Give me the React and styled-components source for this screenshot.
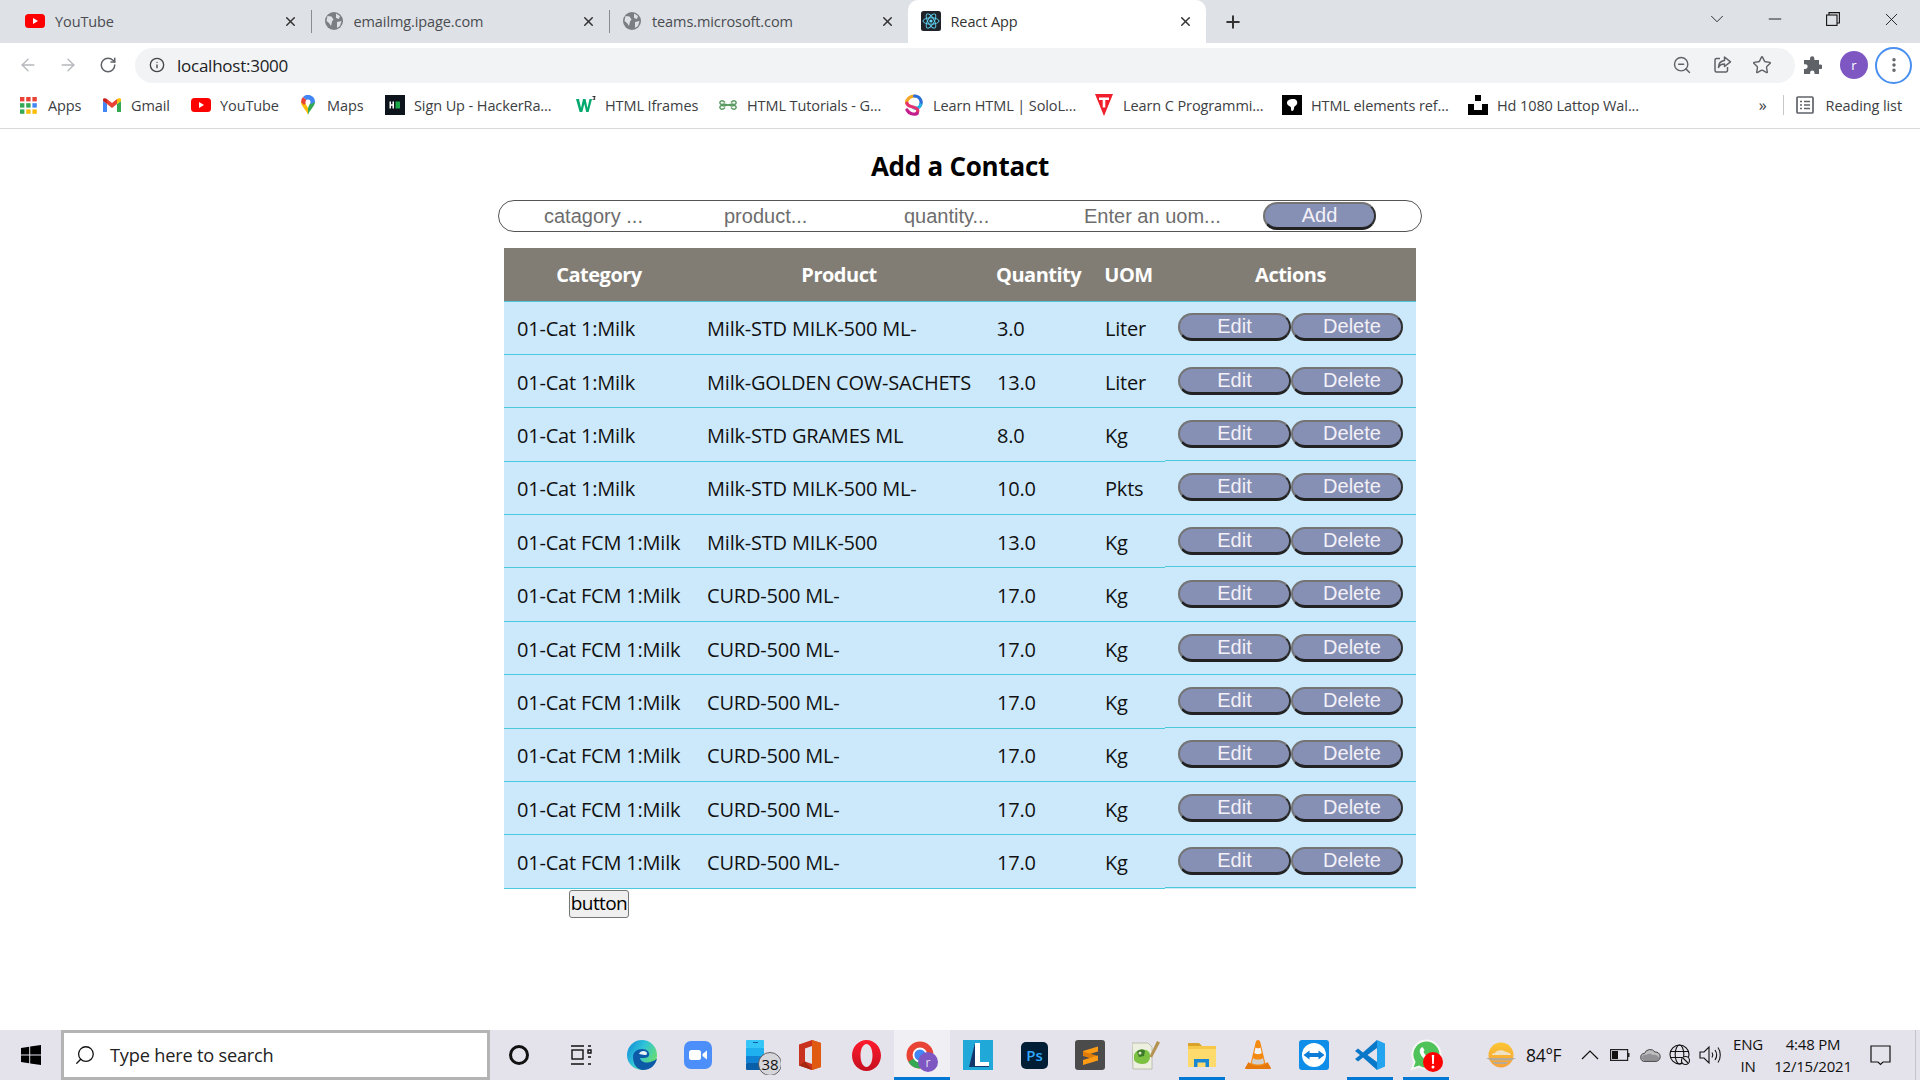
import styled, { createGlobalStyle } from "styled-components";
import { ArrowLeft, ArrowRight, RotateCw, Info, ZoomOut, Star, EllipsisVertical, X, Plus, ChevronDown, Minus, Search } from "lucide-react";

const GlobalStyle = createGlobalStyle`
  html, body { margin: 0; padding: 0; background: #fff; }
  * { box-sizing: border-box; }
`;

const UI_FONT = `"Open Sans", "Noto Sans", sans-serif`;

const YoutubeIcon = () => (
  <svg width="20" height="14" viewBox="0 0 20 14">
    <rect width="20" height="14" rx="3.5" fill="#f00" />
    <path d="M8 4v6l5-3z" fill="#fff" />
  </svg>
);

const GlobeFav = () => (
  <svg width="18" height="18" viewBox="0 0 18 18">
    <circle cx="9" cy="9" r="9" fill="#7b7e83" />
    <path d="M2.500 4l4 .5 2 3-1.500 2-1 4.500-2-3-2.500-2zM11 1.500l4 2.500-1 3-3-1zM12 10l4.500-1-1.500 5-3 2z" fill="#dee1e6" />
  </svg>
);

const ReactFav = () => (
  <svg width="20" height="20" viewBox="0 0 20 20">
    <rect width="20" height="20" rx="2.500" fill="#20232a" />
    <g fill="none" stroke="#61dafb" strokeWidth="0.9">
      <ellipse cx="10" cy="10" rx="8" ry="3.200" />
      <ellipse cx="10" cy="10" rx="8" ry="3.200" transform="rotate(60 10 10)" />
      <ellipse cx="10" cy="10" rx="8" ry="3.200" transform="rotate(120 10 10)" />
    </g>
    <circle cx="10" cy="10" r="1.600" fill="#61dafb" />
  </svg>
);

const RestoreIcon = () => (
  <svg width="14" height="14" viewBox="0 0 14 14" fill="none" stroke="#111" strokeWidth="1.100">
    <rect x="0.600" y="3" width="10.400" height="10.400" />
    <path d="M3 3V.6h10.400V11H11" />
  </svg>
);

const ShareIcon = () => (
  <svg width="20" height="20" viewBox="0 0 20 20" fill="none" stroke="#5f6368" strokeWidth="1.500" strokeLinejoin="round">
    <path d="M8 3.500H4.500A1.500 1.500 0 0 0 3 5v10.500A1.500 1.500 0 0 0 4.500 17h9.500a1.500 1.500 0 0 0 1.500-1.500V12" />
    <path d="M12.500 2l6 4.800-6 4.700V9c-3 0-5 1-6 3.500 0-4.500 2-6.500 6-7z" />
  </svg>
);

const PuzzleIcon = () => (
  <svg width="19" height="19" viewBox="0 0 19 19" fill="#5f6368">
    <path d="M7 2.500a2.200 2.200 0 0 1 4.400 0V4H16v4.500h1.300a2.300 2.300 0 0 1 0 4.600H16V18h-4.500v-1.300a2.200 2.200 0 0 0-4.400 0V18H1v-5h1.300a2.400 2.400 0 0 0 0-4.800H1V4h6z" />
  </svg>
);

const AppsIcon = () => {
  const colors = ["#ea4335", "#ea4335", "#ea4335", "#34a853", "#34a853", "#4285f4", "#34a853", "#fbbc04", "#fbbc04"];
  return (
    <svg width="17" height="17" viewBox="0 0 17 17">
      {colors.map((c, i) => (
        <rect key={i} x={(i % 3) * 6.2} y={Math.floor(i / 3) * 6.2} width="4.400" height="4.400" fill={c} />
      ))}
    </svg>
  );
};

const GmailIcon = () => (
  <svg width="18" height="14" viewBox="0 0 18 14">
    <path d="M0 3v11h4V6z" fill="#4285f4" />
    <path d="M18 3v11h-4V6z" fill="#34a853" />
    <path d="M14 1v5l4-3V1.500c0-1.500-2.500-1.700-4-.5z" fill="#fbbc04" />
    <path d="M4 1l5 4 5-4v5L9 10 4 6z" fill="#ea4335" />
    <path d="M0 1.500V3l4 3V1C2.500-.2 0 0 0 1.500z" fill="#c5221f" />
  </svg>
);

const MapsIcon = () => (
  <svg width="14" height="20" viewBox="0 0 14 20">
    <path d="M7 20C6 16 0 11 0 7l3-1 4 7z" fill="#fbbc04" />
    <path d="M7 20c1-4 7-9 7-13l-4-1-3 7z" fill="#34a853" />
    <path d="M0 7a7 7 0 0 1 2-5l5 4-4 4z" fill="#ea4335" />
    <path d="M2 2a7 7 0 0 1 12 5l-4 2-3-3z" fill="#4285f4" />
    <circle cx="7" cy="7" r="2.500" fill="#fff" />
  </svg>
);

const HackerIcon = () => (
  <svg width="20" height="20" viewBox="0 0 20 20">
    <rect width="20" height="20" fill="#0d141c" />
    <path d="M4.500 6.500H6v2.700h1.500V6.500H9v7H7.500v-2.800H6v2.800H4.500z" fill="#fff" />
    <rect x="10.500" y="6.500" width="4.500" height="7" fill="#1ba94c" />
  </svg>
);

const W3Icon = () => (
  <svg width="20" height="18" viewBox="0 0 20 18">
    <path d="M0 3h3l2 9 2-9h2.500l2 9 2-9h2.500l-3.400 13h-2.400L8.300 8l-2 8H3.600z" fill="#04aa6d" />
    <path d="M16.500 0h3v1l-1 1 1 1-1 1h-2v-.8h1.500l-.5-1.200.5-1h-1.500z" fill="#333" />
  </svg>
);

const TutorialsIcon = () => (
  <svg width="18" height="12" viewBox="0 0 18 12" fill="none" stroke="#5b9b62" strokeWidth="1.500">
    <path d="M6 3.500c-3-3.500-5.500-1-5 .7.300 1.300 2 1.800 4 .8l8 2c2-1 3.700-.5 4 .8.500 1.700-2 4.200-5 .7" />
    <path d="M12 3.500c3-3.500 5.500-1 5 .7-.3 1.300-2 1.800-4 .8l-8 2c-2-1-3.700-.5-4 .8-.5 1.700 2 4.200 5 .7" />
  </svg>
);

const SoloIcon = () => (
  <svg width="20" height="22" viewBox="0 0 20 22" fill="none" strokeWidth="3.200" strokeLinecap="round">
    <path d="M2.500 9c0-4 4-7 8-7" stroke="#f5a623" />
    <path d="M10.500 2c5 0 8 5 6 9" stroke="#2d6fd8" />
    <path d="M16.500 11c-1 3-4 4-7 2.500" stroke="#27b3e6" />
    <path d="M3 9c0 3 3 3 6 4 4 1 6 3 4 6" stroke="#e5336f" />
    <path d="M13 19.500c-3 1.500-8 .5-10-3.500" stroke="#c21e8c" />
  </svg>
);

const LearnCIcon = () => (
  <svg width="18" height="22" viewBox="0 0 18 22">
    <path d="M0 0h18L9 22z" fill="#f01e2c" />
    <path d="M4 3.500h10v2.500h-3.700v7.500H7.700V6H4z" fill="#fff" />
  </svg>
);

const ElementsIcon = () => (
  <svg width="20" height="20" viewBox="0 0 20 20">
    <rect width="20" height="20" fill="#000" />
    <path d="M5 8c0-3 3-4 6-4 3 0 5 2 4 5-1 2-3 2-3 4 0 2-1 3-2 3s-1-2-1-3c0-2-4-2-4-5z" fill="#fff" />
  </svg>
);

const WallIcon = () => (
  <svg width="20" height="20" viewBox="0 0 20 20">
    <rect x="7" y="0" width="6" height="6" fill="#000" />
    <path d="M0 9h6v6h8V9h6v11H0z" fill="#000" />
  </svg>
);

const ReadingIcon = () => (
  <svg width="18" height="18" viewBox="0 0 18 18" fill="none" stroke="#5f6368" strokeWidth="1.700">
    <rect x="1" y="1" width="16" height="16" rx="1" />
    <path d="M4 5.500h2M8 5.500h6M4 9h2M8 9h6M4 12.500h2M8 12.500h6" />
  </svg>
);

const WindowsIcon = () => (
  <svg width="20" height="20" viewBox="0 0 20 20" fill="#000">
    <path d="M0 3l8.200-1.200v7.700H0zM9.200 1.600 20 0v9.500H9.200zM0 10.500h8.200v7.700L0 17zM9.200 10.500H20V20L9.200 18.400z" />
  </svg>
);

const TaskViewIcon = () => (
  <svg width="22" height="22" viewBox="0 0 22 22" fill="none" stroke="#111" strokeWidth="1.400">
    <path d="M1 2h13M1 20h13M18 2h3M18 20h3" />
    <rect x="2" y="6" width="11" height="9" />
    <path d="M18 6h3v3h-3zM18 13h3" />
  </svg>
);

const EdgeIcon = () => (
  <svg width="30" height="30" viewBox="0 0 30 30">
    <defs>
      <linearGradient id="edgeTop" x1="0" y1="0" x2="1" y2="0.600">
        <stop offset="0" stopColor="#0f86d8" />
        <stop offset="0.500" stopColor="#2fc4d8" />
        <stop offset="1" stopColor="#68de70" />
      </linearGradient>
    </defs>
    <circle cx="15" cy="15" r="15" fill="url(#edgeTop)" />
    <path d="M6 17c0-5 4-8 9-8 5 0 8 3 7 6.500-.5 1.500-2 2.500-5 2.500h-4c.5 3 4 5 8 4.500 3-.3 6-1.500 9-4-1.500 7-7 11.500-14 11.500-5 0-10-5-10-13z" fill="#0c5aa8" />
    <path d="M12 14c.5-2 2.500-3 4.500-3 2 0 3.500 1 3.500 2.500 0 1-1 1.500-2.500 1.500z" fill="#e8f4f6" />
  </svg>
);

const ZoomIcon = () => (
  <svg width="28" height="28" viewBox="0 0 28 28">
    <rect width="28" height="28" rx="7" fill="#4c8ffb" />
    <rect x="5" y="9" width="12" height="10" rx="2.500" fill="#fff" />
    <path d="M18.500 13l4.500-3.500v9L18.500 15z" fill="#fff" />
  </svg>
);

const PhoneIcon = () => (
  <svg width="54" height="40" viewBox="0 0 54 40">
    <rect x="19" y="5" width="18" height="8" rx="1" fill="#35c5f7" />
    <rect x="26" y="7" width="5" height="1" fill="#0a5fa8" />
    <rect x="19" y="13" width="18" height="8" fill="#1fb0f0" />
    <rect x="19" y="21" width="18" height="7" fill="#0f82d4" />
    <rect x="19" y="28" width="18" height="7" rx="1" fill="#0a5fa8" />
    <circle cx="43" cy="29" r="11.500" fill="#d5d5da" stroke="#444" strokeWidth="0.800" />
    <text x="43" y="34.500" textAnchor="middle" fontSize="15" fontFamily="Open Sans" fill="#111">38</text>
  </svg>
);

const OfficeIcon = () => (
  <svg width="24" height="30" viewBox="0 0 24 30">
    <path d="M14 0L1 4.500v21L14 30l9-3V3z" fill="#c8321e" />
    <path d="M14 0l9 3v24l-9 3z" fill="#e05a12" />
    <path d="M14 6L7 8.500v13L14 24z" fill="#e4e2ea" />
    <path d="M1 25.500l6-4 7 8.500z" fill="#a5260f" />
  </svg>
);

const OperaIcon = () => (
  <svg width="29" height="31" viewBox="0 0 29 31">
    <defs>
      <linearGradient id="operaRed" x1="0" y1="0" x2="0" y2="1">
        <stop offset="0" stopColor="#ff1b2d" />
        <stop offset="1" stopColor="#c50f1f" />
      </linearGradient>
    </defs>
    <path fillRule="evenodd" fill="url(#operaRed)" d="M14.500 0C22.500 0 29 7 29 15.500S22.500 31 14.500 31 0 24 0 15.500 6.500 0 14.500 0zm0 4C11 4 8.500 9 8.500 15.500S11 27 14.500 27s6-5 6-11.500S18 4 14.500 4z" />
  </svg>
);

const ChromeIcon = () => (
  <svg width="40" height="40" viewBox="0 0 40 40">
    <circle cx="18" cy="20" r="13.500" fill="#e94335" />
    <path d="M18 20L6.300 26.800A13.500 13.500 0 0 0 18 33.500z" fill="#34a853" />
    <path d="M18 20h13.500A13.500 13.500 0 0 1 18 33.500z" fill="#fbbc04" />
    <circle cx="18" cy="20" r="6.500" fill="#4285f4" stroke="#fff" strokeWidth="1.800" />
    <circle cx="26" cy="27" r="10" fill="#7e57c2" />
    <text x="26" y="31.500" textAnchor="middle" fontSize="12" fontFamily="Open Sans" fill="#e8e0f4">r</text>
  </svg>
);

const LIcon = () => (
  <svg width="30" height="30" viewBox="0 0 30 30">
    <rect width="30" height="30" fill="#1fa8d8" />
    <path d="M12 3h5v19h9v4H12z" fill="#fff" />
    <path d="M12 3L6 27h20v-1H12z" fill="#12366b" />
  </svg>
);

const PsIcon = () => (
  <svg width="27" height="27" viewBox="0 0 27 27">
    <rect width="27" height="27" rx="5" fill="#001e36" />
    <text x="13.500" y="19" textAnchor="middle" fontSize="15" fontWeight="600" fontFamily="Open Sans" fill="#31a8ff">Ps</text>
  </svg>
);

const SublimeIcon = () => (
  <svg width="30" height="30" viewBox="0 0 30 30">
    <rect width="30" height="30" rx="3" fill="#4b4b4b" />
    <path d="M23 6.500v5L8 16v-5z" fill="#ff9a15" />
    <path d="M8 11.500l15 4.500v4.500L8 16z" fill="#e07d0a" />
    <path d="M23 15.500v5L8 25v-5z" fill="#ff9a15" />
  </svg>
);

const NotepadIcon = () => (
  <svg width="28" height="30" viewBox="0 0 28 30">
    <path d="M0 3h16l4 4v22H1z" fill="#edf0e0" stroke="#a9ad98" strokeWidth="0.700" />
    <path d="M2 15c2-6 11-7 15-3 2 3 1 9-2 11-4 2-11 1-13-3z" fill="#7cc142" />
    <path d="M5 12c2-3 6-3 8-1l-1 5-5 1z" fill="#3c7a2a" />
    <circle cx="8" cy="13" r="1.500" fill="#dfe8c0" />
    <path d="M25 1l3 1.500-8 15-2.500-1z" fill="#b3914f" />
  </svg>
);

const ExplorerIcon = () => (
  <svg width="28" height="30" viewBox="0 0 28 30">
    <path d="M0 3h11l3 3H0z" fill="#d9a22a" />
    <rect y="6" width="28" height="6" fill="#f6c846" />
    <rect y="9" width="28" height="18" fill="#ffdb6e" />
    <path d="M6 27V19h15v8h-3.500v-4.500h-8V27z" fill="#1a87d4" />
  </svg>
);

const VlcIcon = () => (
  <svg width="26" height="30" viewBox="0 0 26 30">
    <path d="M3.500 22L0 28c0 1 1 1 2 1h22c1 0 2 0 2-1l-3.500-6c-1 3-18 3-19 0z" fill="#e6790d" />
    <path d="M13 0c1.500 0 2 1 2.500 3l5 21c-2 2.500-13 2.500-15 0l5-21C11 1 11.500 0 13 0z" fill="#f48a12" />
    <path d="M10.500 7.500c1 1 4 1 5 0l1.200 5.500c-1.500 1.500-5.900 1.500-7.400 0z" fill="#f4f4f4" />
    <path d="M8 18c2 2 8 2 10 0l1.200 5c-2.500 2-9.900 2-12.400 0z" fill="#d0d0d0" />
  </svg>
);

const TeamViewerIcon = () => (
  <svg width="30" height="30" viewBox="0 0 30 30">
    <rect width="30" height="30" rx="3" fill="#0e8ee9" />
    <circle cx="15" cy="15" r="12" fill="#fff" />
    <path d="M4.500 15l6-4.500V13h9v-2.500l6 4.500-6 4.500V17h-9v2.500z" fill="#0e7dd8" />
  </svg>
);

const VscodeIcon = () => (
  <svg width="30" height="30" viewBox="0 0 30 30">
    <path fillRule="evenodd" d="M22 0v8l-9.500 7 9.500 7v8L8 17.500 3 21.500 0 19l5-4-5-4 3-2.500 5 4z" fill="#0a78c8" />
    <path d="M22 0l8 3.500v23L22 30z" fill="#24a3ef" />
  </svg>
);

const WhatsappIcon = () => (
  <svg width="40" height="40" viewBox="0 0 40 40">
    <path d="M6 34l2.500-7A14 14 0 1 1 13 31.500z" fill="#4fc35a" stroke="#f6f6f6" strokeWidth="2" />
    <path d="M15 13c-2 2-1.500 5 1 8.500s6 5 9 4l1.500-3-3.500-2-1.500 1c-2-1-3-3-4-4.500l1-2-2-3z" fill="#fff" />
    <circle cx="27" cy="27" r="10" fill="#f00" />
    <path d="M25.800 20h2.400l-.4 9h-1.600z" fill="#fff" />
    <circle cx="27" cy="32" r="1.500" fill="#fff" />
  </svg>
);

const WeatherIcon = () => (
  <svg width="30" height="26" viewBox="0 0 30 26">
    <defs>
      <linearGradient id="sun" x1="0" y1="0" x2="0" y2="1">
        <stop offset="0" stopColor="#fbc531" />
        <stop offset="1" stopColor="#f7a13a" />
      </linearGradient>
    </defs>
    <circle cx="15" cy="13" r="12.500" fill="url(#sun)" />
    <path d="M9 11c1-3 8-4 11-1 3 0 5 2 5 3H6c0-1 1-2 3-2z" fill="#efe2c4" />
    <path d="M0 16h30l-5 2.500H5zM6 20h17l-3 2H9z" fill="#b5a99a" />
  </svg>
);

const TrayChevron = () => (
  <svg width="18" height="12" viewBox="0 0 18 12" fill="none" stroke="#111" strokeWidth="1.200">
    <path d="M1 10l8-8 8 8" />
  </svg>
);

const BatteryIcon = () => (
  <svg width="20" height="12" viewBox="0 0 20 12">
    <rect x="0.600" y="0.600" width="17" height="10.800" fill="none" stroke="#222" strokeWidth="1.200" />
    <rect x="2" y="2" width="6" height="8" fill="#111" />
    <rect x="18" y="4" width="1.500" height="4" fill="#222" />
  </svg>
);

const CloudIcon = () => (
  <svg width="21" height="14" viewBox="0 0 21 14">
    <path d="M5 13.400a4 4 0 0 1-.5-8A6 6 0 0 1 15 4a4.700 4.700 0 0 1 1 9.400z" fill="#bdbdc0" stroke="#333" strokeWidth="0.900" />
    <path d="M1.500 10c1-3 3-4 5-3 2-2 5-1 6 0 2-1 5 0 7 3l-2 3H4z" fill="#6f6f72" opacity=".55" />
  </svg>
);

const GlobeIcon = () => (
  <svg width="22" height="22" viewBox="0 0 22 22" fill="none" stroke="#111" strokeWidth="1.100">
    <circle cx="10.500" cy="10.500" r="9.500" />
    <ellipse cx="10.500" cy="10.500" rx="4.300" ry="9.500" />
    <path d="M1.500 7.500h18M1.500 13.500h18" />
    <circle cx="16.500" cy="16.500" r="4" fill="#e4e2ea" />
    <path d="M14 14l5 5" />
  </svg>
);

const VolumeIcon = () => (
  <svg width="22" height="20" viewBox="0 0 22 20" fill="none" stroke="#111" strokeWidth="1.100">
    <path d="M1 7h4l5-5v16l-5-5H1z" />
    <path d="M13 7.500c1 1.500 1 3.500 0 5M16 5c2 3 2 7 0 10M19 2.500c3 4 3 11 0 15" />
  </svg>
);

const NotifyIcon = () => (
  <svg width="21" height="21" viewBox="0 0 21 21" fill="none" stroke="#111" strokeWidth="1.200">
    <path d="M1 1h19v16h-7l-2.500 2.500L8 17H1z" />
  </svg>
);

const rows = [
  ["01-Cat 1:Milk", "Milk-STD MILK-500 ML-", "3.0", "Liter"],
  ["01-Cat 1:Milk", "Milk-GOLDEN COW-SACHETS", "13.0", "Liter"],
  ["01-Cat 1:Milk", "Milk-STD GRAMES ML", "8.0", "Kg"],
  ["01-Cat 1:Milk", "Milk-STD MILK-500 ML-", "10.0", "Pkts"],
  ["01-Cat FCM 1:Milk", "Milk-STD MILK-500", "13.0", "Kg"],
  ...Array.from({ length: 6 }, () => ["01-Cat FCM 1:Milk", "CURD-500 ML-", "17.0", "Kg"]),
];

const liftedRows = [2, 4, 7, 10];

const tabs = [
  { title: "YouTube", icon: <YoutubeIcon /> },
  { title: "emailmg.ipage.com", icon: <GlobeFav />, sep: true },
  { title: "teams.microsoft.com", icon: <GlobeFav />, sep: true },
  { title: "React App", icon: <ReactFav />, active: true },
];

const bookmarks = [
  { label: "Apps", icon: <AppsIcon />, w: 83 },
  { label: "Gmail", icon: <GmailIcon />, w: 89 },
  { label: "YouTube", icon: <YoutubeIcon />, w: 107 },
  { label: "Maps", icon: <MapsIcon />, w: 87 },
  { label: "Sign Up - HackerRa...", icon: <HackerIcon />, w: 191 },
  { label: "HTML Iframes", icon: <W3Icon />, w: 142 },
  { label: "HTML Tutorials - G...", icon: <TutorialsIcon />, w: 186 },
  { label: "Learn HTML | SoloL...", icon: <SoloIcon />, w: 190 },
  { label: "Learn C Programmi...", icon: <LearnCIcon />, w: 188 },
  { label: "HTML elements ref...", icon: <ElementsIcon />, w: 186 },
  { label: "Hd 1080 Lattop Wal...", icon: <WallIcon />, w: 205 },
];

const apps = [
  { icon: <EdgeIcon /> },
  { icon: <ZoomIcon /> },
  { icon: <PhoneIcon /> },
  { icon: <OfficeIcon /> },
  { icon: <OperaIcon /> },
  { icon: <ChromeIcon />, on: true, hi: true },
  { icon: <LIcon /> },
  { icon: <PsIcon /> },
  { icon: <SublimeIcon /> },
  { icon: <NotepadIcon /> },
  { icon: <ExplorerIcon />, on: true },
  { icon: <VlcIcon /> },
  { icon: <TeamViewerIcon /> },
  { icon: <VscodeIcon />, on: true },
  { icon: <WhatsappIcon />, on: true },
];

const App = () => {
  return (
    <Screen>
      <GlobalStyle />
      <TabStrip>
        {tabs.map((t) => (
          <Tab key={t.title} $active={t.active} $sep={t.sep}>
            <TabIcon>{t.icon}</TabIcon>
            <TabTitle>{t.title}</TabTitle>
            <X size={15} strokeWidth={2.4} color="#333" />
          </Tab>
        ))}
        <NewTab><Plus size={20} strokeWidth={2.4} color="#333" /></NewTab>
        <WindowControls>
          <WindowButton><ChevronDown size={22} strokeWidth={1} color="#222" /></WindowButton>
          <WindowButton><Minus size={20} strokeWidth={1.1} color="#111" /></WindowButton>
          <WindowButton><RestoreIcon /></WindowButton>
          <WindowButton><X size={21} strokeWidth={1} color="#111" /></WindowButton>
        </WindowControls>
      </TabStrip>

      <Toolbar>
        <NavIcon><ArrowLeft size={20} color="#b4b7bb" strokeWidth={1.6} /></NavIcon>
        <NavIcon><ArrowRight size={20} color="#b4b7bb" strokeWidth={1.6} /></NavIcon>
        <NavIcon><RotateCw size={18} color="#5f6368" strokeWidth={2} /></NavIcon>
        <Omnibox>
          <Info size={16} color="#444" strokeWidth={2} />
          <Url>localhost:3000</Url>
          <OmniActions>
            <ZoomOut size={20} color="#5f6368" strokeWidth={1.7} />
            <ShareIcon />
            <Star size={20} color="#5f6368" strokeWidth={1.7} />
          </OmniActions>
        </Omnibox>
        <ToolActions>
          <PuzzleIcon />
          <Avatar>r</Avatar>
          <MenuRing><EllipsisVertical size={18} color="#5f6368" strokeWidth={2.6} /></MenuRing>
        </ToolActions>
      </Toolbar>

      <BookmarkBar>
        {bookmarks.map((b) => (
          <Bookmark key={b.label} $w={b.w}>
            <BookmarkIcon>{b.icon}</BookmarkIcon>
            {b.label}
          </Bookmark>
        ))}
        <BookmarkEnd>
          <More>»</More>
          <Divider />
          <ReadingIcon />
          <span>Reading list</span>
        </BookmarkEnd>
      </BookmarkBar>

      <Page>
        <Title>Add a Contact</Title>
        <AddForm>
          <FormInput placeholder="catagory ..." />
          <FormInput placeholder="product..." />
          <FormInput placeholder="quantity..." />
          <FormInput placeholder="Enter an uom..." />
          <AddButton $w={113}>Add</AddButton>
        </AddForm>

        <TableBlock>
          <Table>
            <colgroup>
              <col width="190" />
              <col width="290" />
              <col width="108" />
              <col width="73" />
              <col width="251" />
            </colgroup>
            <thead>
              <tr>
                <Th>Category</Th>
                <Th>Product</Th>
                <Th>Quantity</Th>
                <Th>UOM</Th>
                <Th>Actions</Th>
              </tr>
            </thead>
            <tbody>
              {rows.map((r, i) => (
                <tr key={i}>
                  {r.map((v, j) => <Td key={j}>{v}</Td>)}
                  <ActionCell $lift={liftedRows.includes(i)}>
                    <ActionWrap>
                      <PillButton $w={113}>Edit</PillButton>
                      <PillButton $w={112} $pad={10}>Delete</PillButton>
                    </ActionWrap>
                  </ActionCell>
                </tr>
              ))}
            </tbody>
          </Table>
          <PlainButtonCol>
            <PlainButton>button</PlainButton>
          </PlainButtonCol>
        </TableBlock>
      </Page>

      <Taskbar>
        <StartCell><WindowsIcon /></StartCell>
        <SearchBox>
          <Search size={22} strokeWidth={1.4} color="#111" style={{ transform: "scaleX(-1)" }} />
          <span>Type here to search</span>
        </SearchBox>
        <TaskCell $w={58}><Cortana /></TaskCell>
        <TaskCell $w={66}><TaskViewIcon /></TaskCell>
        {apps.map((a, i) => (
          <TaskCell key={i} $w={56} $on={a.on} $hi={a.hi}>{a.icon}</TaskCell>
        ))}
        <Tray>
          <WeatherIcon />
          <Temp>84°F</Temp>
          <TrayIcons>
            <TrayCell><TrayChevron /></TrayCell>
            <TrayCell><BatteryIcon /></TrayCell>
            <TrayCell><CloudIcon /></TrayCell>
            <TrayCell><GlobeIcon /></TrayCell>
            <TrayCell><VolumeIcon /></TrayCell>
          </TrayIcons>
          <Lang><span>ENG</span><span>IN</span></Lang>
          <Clock><span>4:48 PM</span><span>12/15/2021</span></Clock>
          <NotifyIcon />
          <ShowDesktop />
        </Tray>
      </Taskbar>
    </Screen>
  );
};

const Screen = styled.div`
  width: 1920px;
  height: 1080px;
  display: flex;
  flex-direction: column;
  overflow: hidden;
  font-family: ${UI_FONT};
`;

const TabStrip = styled.div`
  height: 43px;
  flex: none;
  display: flex;
  align-items: stretch;
  padding-left: 12px;
  background: #dee1e6;
`;

const Tab = styled.div`
  width: 298.5px;
  display: flex;
  align-items: center;
  gap: 10px;
  padding: 0 13px 1px;
  position: relative;
  font-size: 14.5px;
  letter-spacing: -0.1px;
  color: ${(p) => (p.$active ? "#333" : "#4a4c50")};
  background: ${(p) => (p.$active ? "#fff" : "transparent")};
  border-radius: ${(p) => (p.$active ? "10px 10px 0 0" : "0")};

  &::before {
    content: "";
    display: ${(p) => (p.$sep ? "block" : "none")};
    position: absolute;
    left: 0;
    top: 10px;
    bottom: 10px;
    width: 1px;
    background: #8a8c90;
  }
`;

const TabIcon = styled.span`
  width: 20px;
  flex: none;
  display: flex;
  justify-content: center;
`;

const TabTitle = styled.span`
  flex: 1;
`;

const NewTab = styled.div`
  width: 54px;
  display: flex;
  align-items: center;
  justify-content: center;
`;

const WindowControls = styled.div`
  margin-left: auto;
  display: flex;
  padding-bottom: 5px;
`;

const WindowButton = styled.div`
  width: 58px;
  display: flex;
  align-items: center;
  justify-content: center;
`;

const Toolbar = styled.div`
  height: 44px;
  flex: none;
  display: flex;
  align-items: center;
  padding-left: 8px;
  background: #fff;
`;

const NavIcon = styled.div`
  width: 40px;
  display: flex;
  justify-content: center;
`;

const Omnibox = styled.div`
  margin-left: 7px;
  width: 1660px;
  height: 35px;
  border-radius: 18px;
  background: #f1f3f4;
  display: flex;
  align-items: center;
  padding: 0 23px 0 14px;
`;

const Url = styled.span`
  margin-left: 12px;
  font-size: 17px;
  letter-spacing: -0.25px;
  color: #202124;
`;

const OmniActions = styled.div`
  margin-left: auto;
  display: flex;
  gap: 20px;
  align-items: center;
`;

const ToolActions = styled.div`
  margin-left: 8px;
  display: flex;
  align-items: center;
`;

const Avatar = styled.div`
  width: 28px;
  height: 28px;
  margin: 0 7px 0 18px;
  border-radius: 50%;
  background: #7e57c2;
  color: #fff;
  font-size: 13px;
  display: flex;
  align-items: center;
  justify-content: center;
`;

const MenuRing = styled.div`
  width: 37px;
  height: 37px;
  border-radius: 50%;
  border: 2px solid #4a90f0;
  display: flex;
  align-items: center;
  justify-content: center;
`;

const BookmarkBar = styled.div`
  height: 42px;
  flex: none;
  display: flex;
  align-items: center;
  padding: 0 0 5px 18px;
  background: #fff;
  border-bottom: 1px solid #d9d9d9;
  font-size: 14.5px;
  letter-spacing: -0.1px;
  color: #3c4043;
`;

const Bookmark = styled.div`
  width: ${(p) => p.$w}px;
  flex: none;
  display: flex;
  align-items: center;
  gap: 9px;
  white-space: nowrap;
`;

const BookmarkIcon = styled.span`
  width: 21px;
  display: flex;
  justify-content: center;
  flex: none;
`;

const BookmarkEnd = styled.div`
  margin-left: auto;
  display: flex;
  align-items: center;
  gap: 12px;
  padding-right: 18px;
`;

const More = styled.span`
  font-size: 16px;
  margin-right: 4px;
`;

const Divider = styled.span`
  width: 1px;
  height: 20px;
  background: #c8c8c8;
`;

const Page = styled.main`
  flex: 1;
  min-height: 0;
  background: #fff;
  display: flex;
  flex-direction: column;
  align-items: center;
`;

const Title = styled.h1`
  margin: 20px 0 17px;
  font-size: 26px;
  line-height: 34px;
  font-weight: 700;
  letter-spacing: -0.25px;
  color: #000;
`;

const AddForm = styled.form`
  width: 924px;
  height: 32px;
  border: 1px solid #555;
  border-radius: 16px;
  display: flex;
  align-items: center;
  padding-left: 45px;
`;

const FormInput = styled.input`
  width: 180px;
  height: 28px;
  border: 0;
  outline: 0;
  padding: 0;
  background: transparent;
  font-family: "Liberation Sans", Arial, sans-serif;
  font-size: 20px;

  &::placeholder {
    color: #6d6d6d;
    opacity: 1;
  }
`;

const PillButton = styled.button`
  width: ${(p) => p.$w}px;
  height: 28px;
  flex: none;
  padding: 0 0 1px ${(p) => p.$pad || 0}px;
  border-radius: 14px;
  border-style: solid;
  border-width: 2px 2px 3px 2px;
  border-color: #747474 #2f2f2f #222 #747474;
  background: #8690b5;
  color: #f4f0f8;
  font-family: "Liberation Sans", Arial, sans-serif;
  font-size: 20px;
  line-height: 1;
`;

const AddButton = styled(PillButton)`
  margin-left: -1px;
`;

const TableBlock = styled.div`
  width: 912px;
  margin-top: 16px;
`;

const Table = styled.table`
  width: 912px;
  border-collapse: collapse;
  table-layout: fixed;
  font-size: 20px;
  letter-spacing: -0.2px;
`;

const Th = styled.th`
  height: 53px;
  padding: 1px 12px 0;
  background: #817d75;
  color: #fff;
  font-weight: 700;
  font-size: 20px;
  letter-spacing: -0.5px;
  text-align: center;
  border-bottom: 1px solid #4dc9dc;
  white-space: nowrap;
`;

const Td = styled.td`
  height: 53.4px;
  padding: 2px 13px 0;
  background: #cce9fc;
  color: #111;
  text-align: left;
  border-bottom: 1px solid #4dc9dc;
  white-space: nowrap;
`;

const ActionCell = styled(Td)`
  padding: 0 0 1px 13px;
  box-shadow: ${(p) => (p.$lift ? "inset 0 -1px 0 #4dc9dc" : "none")};
  border-bottom-color: ${(p) => (p.$lift ? "#cce9fc" : "#4dc9dc")};
`;

const ActionWrap = styled.div`
  display: flex;
`;

const PlainButtonCol = styled.div`
  width: 190px;
  display: flex;
  justify-content: center;
  padding-top: 1px;
`;

const PlainButton = styled.button`
  width: 60px;
  height: 28px;
  padding: 0;
  border: 1px solid #767676;
  border-radius: 3px;
  background: #efefef;
  color: #000;
  font-family: ${UI_FONT};
  font-size: 19px;
  letter-spacing: -0.6px;
  line-height: 1;
`;

const Taskbar = styled.footer`
  height: 50px;
  flex: none;
  display: flex;
  align-items: stretch;
  background: #e4e2ea;
`;

const StartCell = styled.div`
  width: 61px;
  display: flex;
  align-items: center;
  justify-content: center;
`;

const SearchBox = styled.div`
  width: 429px;
  border: 3px solid #b4b4b4;
  background: #fff;
  display: flex;
  align-items: center;
  gap: 14px;
  padding-left: 10px;
  font-size: 18.2px;
  letter-spacing: -0.2px;
  color: #222;
`;

const Cortana = styled.span`
  width: 20px;
  height: 20px;
  border: 3px solid #111;
  border-radius: 50%;
`;

const TaskCell = styled.div`
  width: ${(p) => p.$w}px;
  flex: none;
  position: relative;
  display: flex;
  align-items: center;
  justify-content: center;
  background: ${(p) => (p.$hi ? "#f0eff3" : "transparent")};

  &::after {
    content: "";
    display: ${(p) => (p.$on ? "block" : "none")};
    position: absolute;
    left: ${(p) => (p.$hi ? "0" : "5px")};
    right: ${(p) => (p.$hi ? "0" : "5px")};
    bottom: 0;
    height: 3px;
    background: #0078d4;
  }
`;

const Tray = styled.div`
  flex: 1;
  position: relative;
  display: flex;
  align-items: center;
  padding-left: 32px;
  color: #111;
`;

const Temp = styled.span`
  margin-left: 10px;
  width: 42px;
  font-size: 17.5px;
  letter-spacing: -0.3px;
`;

const TrayIcons = styled.div`
  margin-left: 7px;
  display: flex;
  align-items: center;
`;

const TrayCell = styled.span`
  width: 30px;
  display: flex;
  justify-content: center;
`;

const Lang = styled.div`
  margin-left: 5px;
  width: 36px;
  display: flex;
  flex-direction: column;
  align-items: center;
  gap: 2px;
  font-size: 15px;
  letter-spacing: -0.2px;
  line-height: 20px;
`;

const Clock = styled.div`
  margin: 0 12px 0 2px;
  width: 90px;
  display: flex;
  flex-direction: column;
  align-items: center;
  gap: 2px;
  font-size: 15px;
  letter-spacing: -0.2px;
  line-height: 20px;
`;

const ShowDesktop = styled.span`
  position: absolute;
  right: 4px;
  top: 0;
  bottom: 0;
  width: 1px;
  background: #c4c3c9;
`;

export default App;
